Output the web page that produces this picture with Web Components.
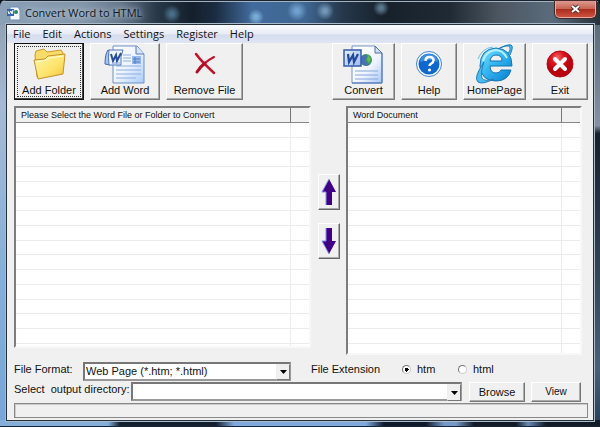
<!DOCTYPE html>
<html lang="en">
<head>
<meta charset="utf-8">
<title>Convert Word to HTML</title>
<style>
html, body { height: 100%; margin: 0; }
body { font: 11px/14px "Liberation Sans", Arial, sans-serif; color: #111; background: #10151d; }
</style>
</head>
<body>
<converter-app></converter-app>
<script>
const define = (name, html, setup) => {
  const tpl = document.createElement('template');
  tpl.innerHTML = html;
  customElements.define(name, class extends HTMLElement {
    constructor() {
      super();
      this.attachShadow({ mode: 'open' }).append(tpl.content.cloneNode(true));
    }
    connectedCallback() { if (setup) setup(this, this.shadowRoot); }
  });
};

const icons = {
  folder: `<svg width="33" height="34" viewBox="0 0 33 32"><defs><linearGradient id="f" x1="0" y1="0" x2="1" y2="1"><stop stop-color="#fff6a8"/><stop offset=".6" stop-color="#fde36b"/><stop offset="1" stop-color="#f2bf35"/></linearGradient></defs><path d="M2 7 3 3 11 1 14 4 28 2 30 5 29 21 7 30 4 29Z" fill="#f9db6a" stroke="#c99a2e"/><path d="M1 12 12 11 15 8 32 6 30 26 5 31Z" fill="url(#f)" stroke="#c4912b" stroke-linejoin="round"/><path d="M3 14 13 12 16 10 30 8" fill="none" stroke="#fffbd5"/></svg>`,
  doc: `<svg width="42" height="39" viewBox="0 0 42 39"><defs><linearGradient id="d" x1="0" y1="0" x2="1" y2="1"><stop stop-color="#fff"/><stop offset=".5" stop-color="#eef5ff"/><stop offset="1" stop-color="#a9cbf8"/></linearGradient></defs><path d="M9 1H33L40 9V38H9Z" fill="url(#d)" stroke="#6d91c9"/><path d="M32 1V9H40" fill="#d6e5fc" stroke="#587bb4"/><path d="M19 10h8M19 13h8M19 16h8M12 21h25M12 25h25M12 29h25M12 33h20" stroke="#8daee0"/><path d="M28 11h9v8h-9z" fill="#98b9ee"/><path d="M29 14h7M29 17h7M31 12v7" stroke="#547dc5"/><path d="M4 5Q1 9 1 19l5 1 1-14Z" fill="#a7c4ef" stroke="#4569a8"/><path d="M5 5h14q-3 6-2 15H5Q4 12 5 5Z" fill="#eff5ff" stroke="#4e76b9"/><path d="M7 9l2 7 3-6 1 6 4-8" fill="none" stroke="#274f9e" stroke-width="2"/><path d="M8 18h8" stroke="#87a7da"/></svg>`,
  remove: `<svg width="24" height="24" viewBox="0 0 24 24"><path d="M3 2Q8 9 21 21" fill="none" stroke="#c4122d" stroke-width="2.5" stroke-linecap="round"/><path d="M21 5Q11 10 4 20" fill="none" stroke="#c4122d" stroke-width="2" stroke-linecap="round"/><path d="M12 11Q8 14 4 20" stroke="#b80b28" stroke-width="3" fill="none" stroke-linecap="round"/></svg>`,
  convert: `<svg width="41" height="39" viewBox="0 0 41 39"><defs><linearGradient id="c" x1="0" y1="0" x2="1" y2="1"><stop offset=".2" stop-color="#fff"/><stop offset=".6" stop-color="#eef4ff"/><stop offset="1" stop-color="#a6c5f5"/></linearGradient><linearGradient id="w" x2="1" y2="1"><stop stop-color="#e4eeff"/><stop offset="1" stop-color="#9dbbee"/></linearGradient></defs><path d="M9 1H32L39 8V38H9Z" fill="url(#c)" stroke="#7595c7"/><path d="M32 1V8H39Z" fill="#cfdff7" stroke="#526e9e"/><path d="M39 8V38H9" fill="none" stroke="#4770b5"/><path d="M12 26h23M12 30h23M12 34h23" stroke="#86a6da"/><circle cx="23" cy="15" r="6" fill="#3d9467"/><path d="M18 13Q21 7 24 12L22 16 26 20Q21 22 18 18Z" fill="#496fb6"/><path d="M25 10l3 4-2 4-2-3Z" fill="#63bd54"/><path d="M1 5H18V21H1Z" fill="url(#w)" stroke="#345ca9" stroke-width="1.5"/><path d="M5 9 6 17 10 10 11 17 15 9" fill="none" stroke="#21489b" stroke-width="2.2"/></svg>`,
  help: `<svg width="28" height="28" viewBox="0 0 28 28"><circle cx="14" cy="14" r="12.5" fill="#f8fbff" stroke="#3f83d4"/><circle cx="14" cy="14" r="10.5" fill="#0e66cf"/><path d="M5 12Q6 4 14 4t9 8Q15 8 5 12" fill="#3c8ee8"/><path d="M10.5 11q0-4 4-4 4 0 4 3.3q0 2-2.2 3.2-1.8 1-1.8 2.500" fill="none" stroke="#fff" stroke-width="2.5"/><circle cx="14.5" cy="20" r="1.600" fill="#fff"/></svg>`,
  home: `<svg width="40" height="40" viewBox="0 0 40 40"><defs><linearGradient id="e" x1="0" y1="0" x2="1" y2="1"><stop stop-color="#88e5ff"/><stop offset=".45" stop-color="#35b7f2"/><stop offset="1" stop-color="#087bd0"/></linearGradient></defs><path d="M37 22H15q0 7 6 7 4 0 5-3h10q-3 11-15 11Q6 37 5 22 5 5 21 4q16 1 16 18ZM15 17h12q0-6-6-6-5 0-6 6Z" fill="url(#e)" fill-rule="evenodd" stroke="#1574b6"/><path d="M35 11Q39 2 36 1 32 0 23 5 33 0 35 3 36 5 33 10M9 18Q-2 34 3 38 7 41 19 35 9 38 7 34 5 30 9 18Z" fill="#49bdf0" stroke="#247db6"/><path d="M3 15Q7 4 18 3" stroke="#61c3e9" fill="none"/><path d="M8 17Q10 8 20 6q8 0 12 8" fill="none" stroke="#b6f0ff" stroke-width="2"/></svg>`,
  exit: `<svg width="28" height="28" viewBox="0 0 28 28"><defs><radialGradient id="x" cx=".4" cy=".25"><stop stop-color="#f36a64"/><stop offset=".5" stop-color="#dc1721"/><stop offset="1" stop-color="#b90410"/></radialGradient></defs><circle cx="14" cy="14" r="13" fill="url(#x)" stroke="#b10e18"/><path d="m9 9 10 10M19 9 9 19" stroke="#fff" stroke-width="4" stroke-linecap="round"/></svg>`,
  up: `<svg width="16" height="28" viewBox="0 0 16 28"><path d="M8 1 15 14H11V27H5V14H1Z" fill="#410083"/><path d="M8 1 1 14H5V27" fill="none" stroke="#8191ee"/></svg>`,
  down: `<svg width="16" height="28" viewBox="0 0 16 28"><path d="M8 27 15 14H11V1H5V14H1Z" fill="#410083"/><path d="M5 1V14H1L8 27" fill="none" stroke="#8191ee"/></svg>`
};

define('title-bar', `<style>
:host { display: flex; align-items: center; height: 25px; padding: 1px 4px 0 7px; box-sizing: border-box; font: 11px/16px "Open Sans", sans-serif; color: #101722;
 background: radial-gradient(circle at 172px 14px, #486d87 0 2px, transparent 9px), radial-gradient(circle at 256px 17px, #77abd2 0 2px, transparent 8px), radial-gradient(circle at 297px 11px, #70a0d0 0 2px, transparent 10px), radial-gradient(circle at 325px 11px, #7095b5 0 2px, transparent 9px), radial-gradient(circle at 381px 8px, #58758a 0 2px, transparent 8px), linear-gradient(90deg, #8aa0b6 0, #8295a8 14%, #65788b 20%, #29394a 26%, #141f2b 32%, #1b2d42 36%, #426b9d 42%, #3f6690 51%, #26384b 57%, #17212c 64%, #202a34 75%, #4c5661 83%, #5a6c7c 92%, #263039);
 box-shadow: inset 0 1px #18232e, inset 0 2px #a2b2c1; }
svg { margin-right: 5px; flex: none; }
h1 { font: inherit; margin: 0; flex: 1; text-shadow: 0 0 5px #c5d5e3, 0 0 8px #c5d5e3; }
button { align-self: flex-start; width: 41px; height: 17px; padding: 0; border: 1px solid #e5aaa3; border-top: 0; border-radius: 0 0 5px 5px; background: linear-gradient(#dc9b8f, #c96354 48%, #a82b1c 50%, #cc513d); box-shadow: 0 0 0 1px #442a2c; }
button svg { display: block; margin: auto; }
</style>
<svg width="13" height="15" viewBox="0 0 13 15"><path d="M3 1h8l2 3v10H3z" fill="#f5f9ff" stroke="#6c8dbb"/><path d="M0 3h7v7H0z" fill="#3566b2"/><circle cx="9" cy="6" r="2" fill="#268568"/><path d="m1 5 1 3 2-3 1 3 1-4" stroke="#fff" fill="none"/></svg>
<h1>Convert Word to HTML</h1>
<button type="button" aria-label="Close"><svg width="11" height="10" viewBox="0 0 11 10"><path d="m2 2 7 6M9 2 2 8" stroke="#583234" stroke-width="4"/><path d="m2 2 7 6M9 2 2 8" stroke="#fff" stroke-width="2"/></svg></button>`);

define('menu-bar', `<style>
:host { display: block; background: linear-gradient(#fbfcfe, #e7ebf6 50%, #d5dced 55%, #dfe5f3); }
nav { display: flex; gap: 12px; padding: 0 6px; height: 18px; }
button { font: 11px/18px "Open Sans", sans-serif; color: #111; border: 0; padding: 0; background: none; }
</style><nav><button>File</button><button>Edit</button><button>Actions</button><button>Settings</button><button>Register</button><button>Help</button></nav>`);

define('tool-button', `<style>
:host { display: block; height: 57px; }
button { width: 100%; height: 100%; display: flex; flex-direction: column; align-items: center; padding: 1px 0 2px; font: 11px/14px "Liberation Sans", Arial, sans-serif; color: #111; background: #f0f0f0; border: 1px solid; border-color: #fff #777 #777 #fff; box-shadow: inset -1px -1px #aaa; white-space: nowrap; }
.icon { flex: 1; min-height: 0; display: flex; align-items: center; }
:host([focused]) button { border-color: #111; box-shadow: inset -1px -1px #444; outline: 1px dotted #333; outline-offset: -4px; }
svg { display: block; }
</style><button type="button"><span class="icon"></span><slot></slot></button>`,
(el, root) => root.querySelector('.icon').innerHTML = icons[el.getAttribute('icon')]);

define('move-button', `<style>
:host { display: block; }
button { width: 22px; height: 36px; display: grid; place-items: center; padding: 0; background: #f0f0f0; border: 1px solid; border-color: #fff #666 #666 #fff; box-shadow: inset -1px -1px #aaa; }
</style><button type="button"></button>`,
(el, root) => {
  const b = root.querySelector('button');
  b.innerHTML = icons[el.getAttribute('dir')];
  b.setAttribute('aria-label', 'Move ' + el.getAttribute('dir'));
});

define('file-list', `<style>
:host { display: block; background: #fff; border: 2px solid; border-color: #7d7d7d #f8f8f8 #f8f8f8 #7d7d7d; box-sizing: border-box; }
table { width: 100%; height: 100%; border-collapse: separate; border-spacing: 0; table-layout: fixed; }
th { height: 14px; padding: 0 0 0 5px; font: 9px/14px "Liberation Sans", Arial, sans-serif; text-align: left; background: #f0f0f0; border-bottom: 1px solid #888; border-right: 1px solid #777; white-space: nowrap; }
td { padding: 0; border-bottom: 1px solid #ececec; border-right: 1px solid #ececec; }
th:last-child, td:last-child { width: 18px; padding: 0; border-right: 0; }
tbody tr:last-child td { height: var(--tail, 2px); border-bottom: 0; }
</style><table><thead><tr><th scope="col"><slot></slot></th><th></th></tr></thead><tbody></tbody></table>`,
(el, root) => root.querySelector('tbody').innerHTML = '<tr><td></td><td></td></tr>'.repeat(+el.getAttribute('rows') + 1));

define('select-field', `<style>
:host { display: flex; min-width: 0; }
label { flex: none; width: var(--label); line-height: 14px; white-space: pre; }
.box { flex: 1; position: relative; min-width: 0; }
select { appearance: none; display: block; width: 100%; height: 19px; padding: 0 20px 0 1px; font: 11px/15px "Liberation Sans", Arial, sans-serif; color: #111; background: #fff; border: 2px solid; border-color: #777 #999 #999 #777; border-radius: 0; }
.arrow { position: absolute; right: 1px; top: 2px; bottom: 1px; width: 14px; background: #f0f0f0; border: 1px solid; border-color: #eee #777 #777 #eee; display: grid; place-items: center; pointer-events: none; box-sizing: border-box; }
</style><label for="s"><slot></slot></label><div class="box"><select id="s"><option></option></select><span class="arrow"><svg width="7" height="4"><path d="M0 0H7L3.5 4Z"/></svg></span></div>`,
(el, root) => root.querySelector('option').textContent = el.getAttribute('value'));

define('extension-choice', `<style>
:host { display: block; }
fieldset { display: flex; border: 0; padding: 0; margin: 0; align-items: center; }
.name { width: 91px; }
label { display: flex; align-items: center; gap: 6px; width: 56px; }
input { appearance: none; width: 9px; height: 9px; margin: 0; border: 1px solid; border-color: #777 #ccc #ccc #777; border-radius: 50%; background: #fff; }
input:checked { background: radial-gradient(circle, #000 0 2px, #fff 2px); }
</style><fieldset aria-labelledby="n"><span class="name" id="n">File Extension</span><label><input type="radio" name="x" checked>htm</label><label><input type="radio" name="x">html</label></fieldset>`);

define('push-button', `<style>
:host { display: block; }
button { width: 100%; height: 20px; padding: 0; font: var(--size, 11px)/14px "Liberation Sans", Arial, sans-serif; color: #111; background: #f0f0f0; border: 1px solid; border-color: #fff #777 #777 #fff; box-shadow: inset -1px -1px #aaa; }
</style><button type="button"><slot></slot></button>`);

define('converter-app', `<style>
:host { display: flex; flex-direction: column; min-height: 100vh; box-sizing: border-box; border-radius: 6px 6px 0 0; overflow: hidden; }
.frame { flex: 1; display: flex; flex-direction: column; padding: 0 7px 7px;
 background: linear-gradient(#172435, #172435) bottom / 100% 1px no-repeat, linear-gradient(90deg, #86aedb 0 18%, #14202e 20% 36%, #7fa8dc 39% 61%, #10192a 64% 71%, #7699c7 74% 76%, #111a25 79% 86%, #6688b4 88%, #111a25 91%) bottom / 100% 7px no-repeat, linear-gradient(#91a3b5, #a4bad5 20%, #82add9 70%, #78a5d6) left / 7px 100% no-repeat, linear-gradient(#5e6d7a, #87929e 25%, #17202b 27%, #33434f 60%, #4b6177 85%, #263e58) right / 7px 100% no-repeat; }
main { flex: 1; display: flex; flex-direction: column; background: #f0f0f0; box-shadow: 0 0 0 1px #26303a, 0 0 0 2px #a9bacb; }
.tools { display: flex; gap: 6px; padding: 0 5px 6px 7px; }
.w56 { width: 56px; } .w63 { width: 63px; } .w70 { width: 70px; } .w77 { width: 77px; }
.gap { flex: 1; }
.lists { flex: 1; display: grid; grid-template-columns: 297fr 35px 236fr; padding: 0 11px 7px 7px; }
.lists file-list:first-child { margin-bottom: 7px; }
.moves { display: flex; flex-direction: column; align-items: center; gap: 13px; padding-top: 68px; }
.row { display: flex; padding: 0 12px 0 7px; margin-bottom: 1px; }
.format { width: 277px; --label: 69px; margin-right: 20px; }
.out { flex: 1; --label: 117px; margin-right: 7px; }
.view { width: 50px; margin-left: 6px; --size: 10px; }
.status { height: 13px; margin: 0 5px 2px 7px; border: 1px solid #888; box-shadow: inset 1px 1px #ccc; }
</style>
<title-bar></title-bar>
<div class="frame"><main>
<menu-bar></menu-bar>
<div class="tools">
<tool-button class="w70" icon="folder" focused>Add Folder</tool-button>
<tool-button class="w70" icon="doc">Add Word</tool-button>
<tool-button class="w77" icon="remove">Remove File</tool-button>
<span class="gap"></span>
<tool-button class="w63" icon="convert">Convert</tool-button>
<tool-button class="w56" icon="help">Help</tool-button>
<tool-button class="w63" icon="home">HomePage</tool-button>
<tool-button class="w56" icon="exit">Exit</tool-button>
</div>
<div class="lists">
<file-list rows="15">Please Select the Word File or Folder to Convert</file-list>
<div class="moves"><move-button dir="up"></move-button><move-button dir="down"></move-button></div>
<file-list rows="15" style="--tail: 9px">Word Document</file-list>
</div>
<div class="row"><select-field class="format" value="Web Page (*.htm; *.html)">File Format:</select-field><extension-choice></extension-choice></div>
<div class="row"><select-field class="out" value="">Select  output directory:</select-field><push-button class="w56">Browse</push-button><push-button class="view">View</push-button></div>
<div class="status" role="status"></div>
</main></div>`);
</script>
</body>
</html>
